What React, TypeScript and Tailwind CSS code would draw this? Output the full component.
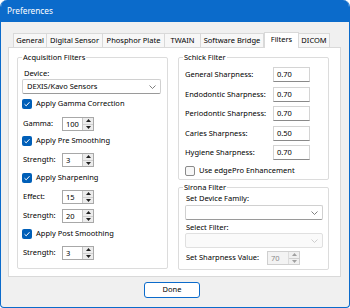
const tabs = [
  { label: "General", w: "w-[34px]" },
  { label: "Digital Sensor", w: "w-[57px]" },
  { label: "Phosphor Plate", w: "w-[63px]" },
  { label: "TWAIN", w: "w-[37px]" },
  { label: "Software Bridge", w: "w-[64px]" },
  { label: "Filters", w: "w-[35px]", active: true },
  { label: "DICOM", w: "w-[32px]" },
];

function Check({ on }: { on?: boolean }) {
  if (!on) {
    return <span className="w-[10px] h-[10px] rounded-[2px] border border-[#8a8a8a] bg-[#f7f7f7] shrink-0" />;
  }
  return (
    <span className="w-[10px] h-[10px] rounded-[2px] bg-[#005fb8] flex items-center justify-center shrink-0">
      <svg width="8" height="8" viewBox="0 0 8 8">
        <polyline points="1.5,4.2 3.2,5.8 6.5,2.2" fill="none" stroke="white" strokeWidth="1" />
      </svg>
    </span>
  );
}

function CheckRow({ label, on, className = "" }: { label: string; on?: boolean; className?: string }) {
  return (
    <div className={`h-[12px] flex items-center gap-[4px] ${className}`}>
      <Check on={on} />
      <span>{label}</span>
    </div>
  );
}

function Spinner({ value, disabled, w = "w-[32px]" }: { value: string; disabled?: boolean; w?: string }) {
  return (
    <div
      className={`${w} h-[14px] flex border ${
        disabled ? "border-[#cfcfcf] bg-[#f3f3f3] text-[#8a8a8a]" : "border-[#a8a8a8] bg-white"
      }`}
    >
      <div className="flex-1 pl-[3px] leading-[12px]">{value}</div>
      <div className={`w-[11px] flex flex-col border-l ${disabled ? "border-[#dcdcdc] bg-[#f0f0f0]" : "border-[#c4c4c4] bg-[#ececec]"}`}>
        <div className="flex-1 flex items-center justify-center border-b border-[#d0d0d0]">
          <svg width="5" height="3" viewBox="0 0 5 3">
            <polygon points="0,3 2.5,0 5,3" fill={disabled ? "#a0a0a0" : "#202020"} />
          </svg>
        </div>
        <div className="flex-1 flex items-center justify-center">
          <svg width="5" height="3" viewBox="0 0 5 3">
            <polygon points="0,0 5,0 2.5,3" fill={disabled ? "#a0a0a0" : "#202020"} />
          </svg>
        </div>
      </div>
    </div>
  );
}

function SpinRow({ label, value, className = "" }: { label: string; value: string; className?: string }) {
  return (
    <div className={`h-[14px] flex items-center ${className}`}>
      <span className="w-[40px] pl-[1px]">{label}</span>
      <Spinner value={value} />
    </div>
  );
}

function Combo({ value, disabled, w, className = "" }: { value?: string; disabled?: boolean; w: string; className?: string }) {
  return (
    <div
      className={`${w} h-[15px] flex items-center justify-between pl-[4px] pr-[4px] border rounded-[2px] ${
        disabled ? "border-[#e0e0e0] bg-[#fafafa]" : "border-[#d0d0d0] border-b-[#9a9a9a] bg-white"
      } ${className}`}
    >
      <span>{value}</span>
      <svg width="7" height="4" viewBox="0 0 7 4">
        <polyline points="0.5,0.5 3.5,3.5 6.5,0.5" fill="none" stroke={disabled ? "#c8c8c8" : "#707070"} strokeWidth="0.9" />
      </svg>
    </div>
  );
}

function Group({ title, className, children }: { title: string; className: string; children: React.ReactNode }) {
  return (
    <div className={`relative border border-[#dcdcdc] rounded-[2px] ${className}`}>
      <span className="absolute -top-[6px] left-[4px] bg-white px-[1px] leading-[10px]">{title}</span>
      {children}
    </div>
  );
}

function Field({ label, value, className = "" }: { label: string; value: string; className?: string }) {
  return (
    <div className={`h-[15px] flex items-center ${className}`}>
      <span className="w-[88px]">{label}</span>
      <div className="w-[37px] h-[15px] border border-[#d4d4d4] border-b-[#8a8a8a] bg-white pl-[3px] leading-[13px]">
        {value}
      </div>
    </div>
  );
}

export default function App() {
  return (
    <div
      className="w-[350px] h-[308px] flex flex-col bg-[#f0f0f0] border-x border-b border-[#0b6bcb] rounded-t-[7px] rounded-b-[4px] overflow-hidden text-[7.5px] text-black"
      style={{ fontFamily: '"Noto Sans", "Liberation Sans", sans-serif' }}
    >
      <div className="h-[22px] shrink-0 bg-[#0b6bcb] text-white text-[8.25px] pl-[6px] flex items-center">Preferences</div>

      <div className="flex-1 flex flex-col pl-[7px] pt-[10px]">
        <div className="h-[15px] flex items-end pl-[5px]">
          {tabs.map((t) =>
            t.active ? (
              <div
                key={t.label}
                className={`${t.w} h-[16px] -mb-px relative z-10 bg-white border-x border-t border-[#d9d9d9] flex items-center justify-center pb-[2px]`}
              >
                {t.label}
              </div>
            ) : (
              <div
                key={t.label}
                className={`${t.w} h-[14px] bg-[#f7f7f7] border-x border-t border-[#d9d9d9] -ml-px first:ml-0 flex items-center justify-center`}
              >
                {t.label}
              </div>
            ),
          )}
        </div>

        <div className="w-[333px] h-[230px] bg-white border border-[#d9d9d9] flex gap-[10px] pl-[8px] pt-[9px]">
          <Group title="Acquisition Filters" className="w-[151px] h-[212px] px-[4px] pt-[10px]">
            <div className="h-[10px] leading-[10px] ml-[2px]">Device:</div>
            <Combo value="DEXIS/Kavo Sensors" w="w-[139px]" className="mt-[1px]" />
            <CheckRow label="Apply Gamma Correction" on className="mt-[4px]" />
            <SpinRow label="Gamma:" value="100" className="mt-[7px]" />
            <CheckRow label="Apply Pre Smoothing" on className="mt-[4px]" />
            <SpinRow label="Strength:" value="3" className="mt-[6px]" />
            <CheckRow label="Apply Sharpening" on className="mt-[5px]" />
            <SpinRow label="Effect:" value="15" className="mt-[6px]" />
            <SpinRow label="Strength:" value="20" className="mt-[5px]" />
            <CheckRow label="Apply Post Smoothing" on className="mt-[5px]" />
            <SpinRow label="Strength:" value="3" className="mt-[6px]" />
          </Group>

          <div className="flex flex-col">
            <Group title="Schick Filter" className="w-[151px] h-[123px] pl-[6px] pt-[9px]">
              <Field label="General Sharpness:" value="0.70" />
              <Field label="Endodontic Sharpness:" value="0.70" className="mt-[5px]" />
              <Field label="Periodontic Sharpness:" value="0.70" className="mt-[4px]" />
              <Field label="Caries Sharpness:" value="0.50" className="mt-[5px]" />
              <Field label="Hygiene Sharpness:" value="0.70" className="mt-[4px]" />
              <CheckRow label="Use edgePro Enhancement" className="mt-[5px]" />
            </Group>

            <Group title="Sirona Filter" className="w-[151px] h-[83px] mt-[7px] pl-[6px] pt-[5px]">
              <div className="h-[10px] leading-[10px] ml-[1px]">Set Device Family:</div>
              <Combo w="w-[138px]" className="mt-[2px]" />
              <div className="h-[10px] leading-[10px] ml-[1px] mt-[2px]">Select Filter:</div>
              <Combo w="w-[138px]" disabled className="mt-[1px]" />
              <div className="h-[14px] flex items-center mt-[3px]">
                <span className="w-[82px] pl-[1px]">Set Sharpness Value:</span>
                <Spinner value="70" disabled w="w-[33px]" />
              </div>
            </Group>
          </div>
        </div>

        <div className="mt-[5px] pl-[136px]">
          <button className="w-[56px] h-[16px] bg-white border border-[#0b6bcb] rounded-[3px] flex items-center justify-center leading-none">
            Done
          </button>
        </div>
      </div>
    </div>
  );
}
